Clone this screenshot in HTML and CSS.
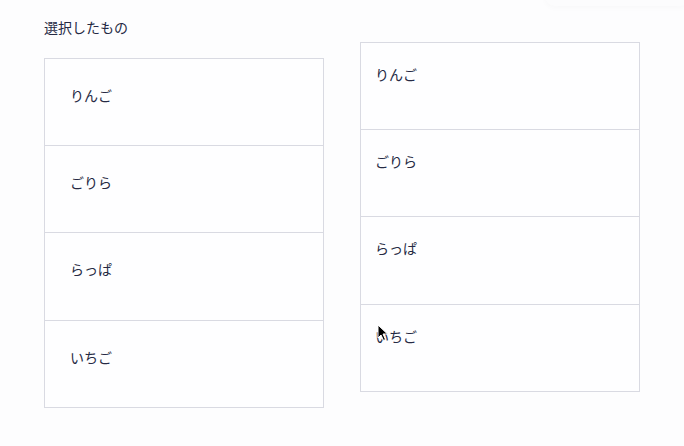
FILE: index.html
```html
<!DOCTYPE html>
<html lang="ja">
<head>
    <meta charset="UTF-8">
    <title>選択したもの</title>
    <link rel="stylesheet" href="styles.css">
</head>
<body>
<div class="toast-shadow"></div>
<div class="wrap">
    <p class="label">選択したもの</p>
    <ul class="list">
        <li>りんご</li>
        <li>ごりら</li>
        <li>らっぱ</li>
        <li>いちご</li>
    </ul>
    <!-- drag preview -->
    <ul class="list ghost">
        <li>りんご</li>
        <li>ごりら</li>
        <li>らっぱ</li>
        <li>いちご</li>
    </ul>
    <svg class="cursor" width="12" height="18" viewBox="0 0 12 18">
        <path d="M1 1 L1 14 L4 11 L6.5 16.5 L8.5 15.5 L6 10 L10.5 10 Z" fill="#000" stroke="#fff" stroke-width="1"/>
    </svg>
</div>
</body>
</html>
```

FILE: styles.css
```css
body,p,ul,li{margin:0;padding:0}
ul{list-style:none}
body{
    background:#fdfdfe;
    font:14px/20px "Noto Sans CJK JP", "Noto Sans", sans-serif;
    color:#262a44;
    width:684px;
    height:446px;
    overflow:hidden;
    position:relative;
}
.toast-shadow{
    position:absolute;
    top:-14px;
    left:545px;
    width:145px;
    height:20px;
    border-radius:10px;
    box-shadow:0 2px 6px rgba(0,0,0,0.025);
    background:#fcfcfd;
}
.wrap{
    position:relative;
    padding:17px 0 0 44px;
}
.label{
    height:20px;
    margin-bottom:21px;
}
.list{
    width:278px;
    border:1px solid #d9dae2;
    background:#fefeff;
}
.list li{
    height:86px;
    box-sizing:border-box;
    padding:26px 25px 0;
}
.list li + li{
    border-top:1px solid #d9dae2;
    height:87.33px;
}
.ghost{
    position:absolute;
    left:360px;
    top:42px;
}
.ghost li{
    padding:21px 14px 0;
}
.cursor{
    position:absolute;
    left:377px;
    top:324px;
}
```
